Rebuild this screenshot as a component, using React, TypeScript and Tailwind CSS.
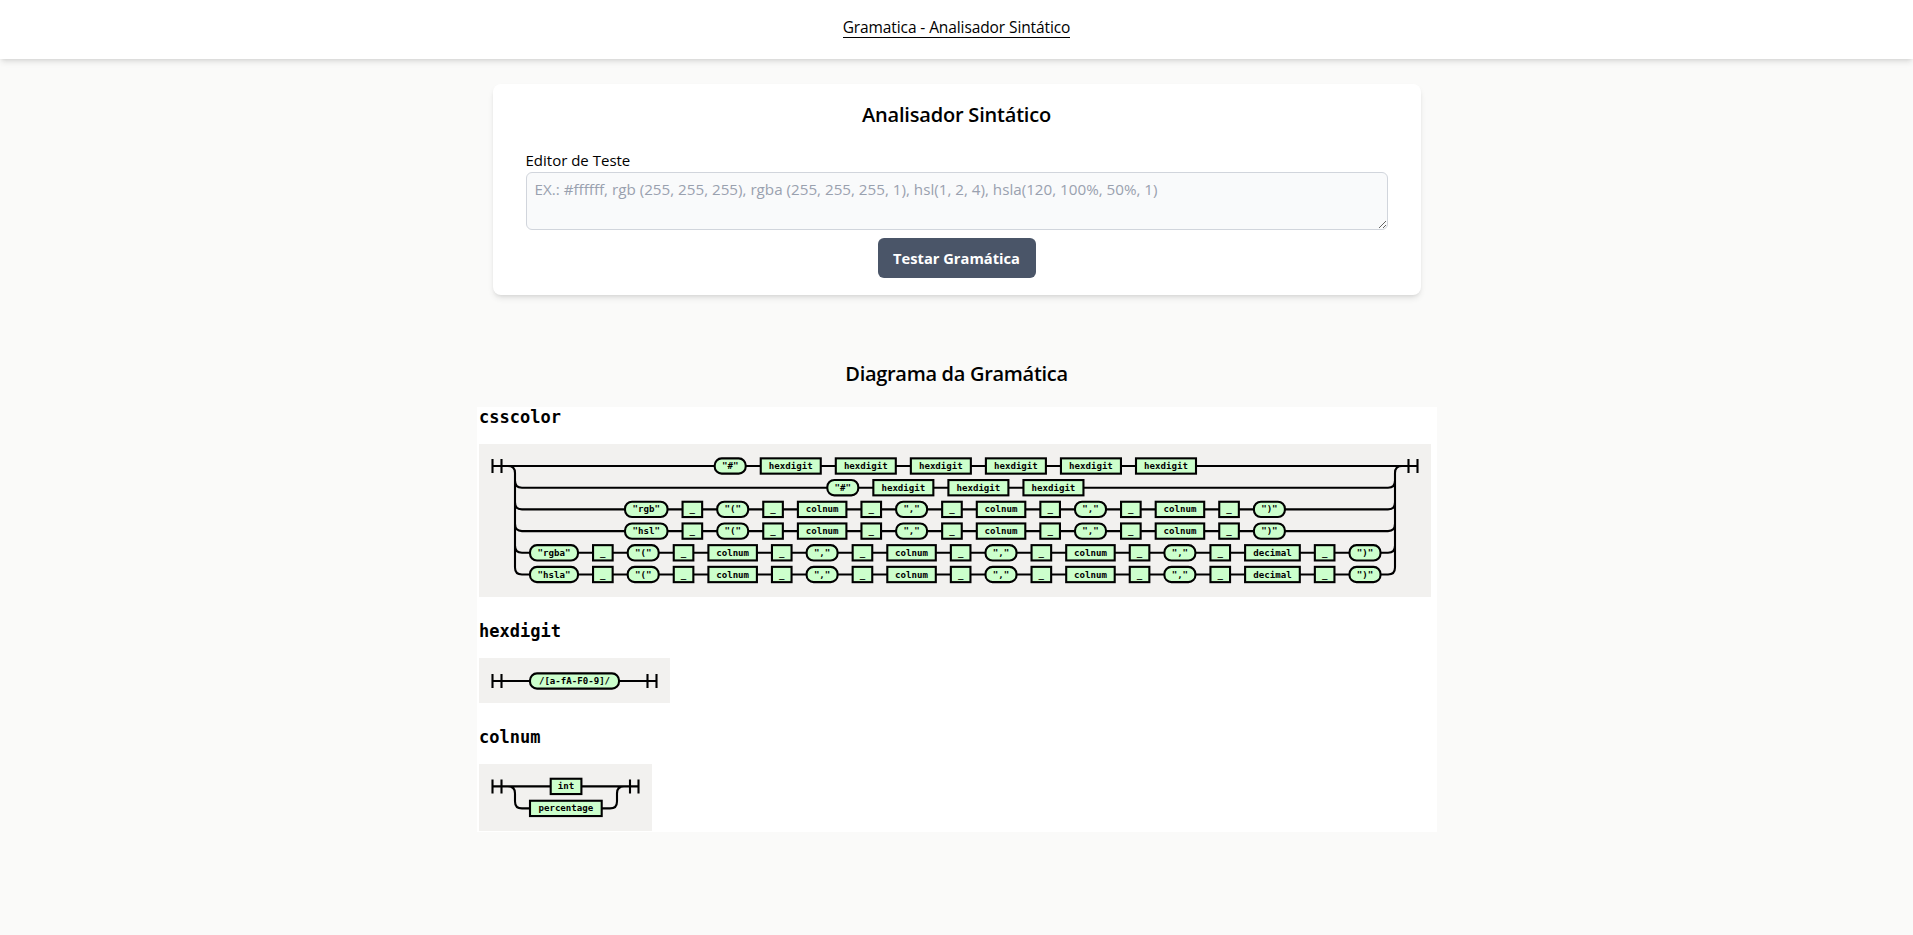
const ROW_H = 17.3;
const GAP = 13.05;

type Item = { label: string; width: number; pill?: boolean };

const hex: Item = { label: 'hexdigit', width: 62 };
const ws: Item = { label: '_', width: 21.6 };
const col: Item = { label: 'colnum', width: 50.5 };
const dec: Item = { label: 'decimal', width: 56.7 };
const pill = (label: string, width = 33): Item => ({ label, width, pill: true });

const comma = pill('","');
const open = pill('"("');
const close = pill('")"');

function colorRow(name: string, width: number) {
  return [pill(name, width), ws, open, ws, col, ws, comma, ws, col, ws, comma, ws, col, ws, close];
}

function alphaRow(name: string) {
  return [pill(name, 50), ws, open, ws, col, ws, comma, ws, col, ws, comma, ws, col, ws, comma, ws, dec, ws, close];
}

const cssRows = [
  { x: 234.7, items: [pill('"#"'), hex, hex, hex, hex, hex, hex] },
  { x: 347.3, items: [pill('"#"'), hex, hex, hex] },
  { x: 145, items: colorRow('"rgb"', 44.5) },
  { x: 145, items: colorRow('"hsl"', 44.5) },
  { x: 50, items: alphaRow('"rgba"') },
  { x: 50, items: alphaRow('"hsla"') },
];

function Node({ item, x, y }: { item: Item; x: number; y: number }) {
  return (
    <g>
      <rect
        x={x + 1}
        y={y - ROW_H / 2 + 1}
        width={item.width - 2}
        height={ROW_H - 2}
        rx={item.pill ? 7 : 0}
        fill="#ccffcc"
        stroke="#000"
        strokeWidth="2.1"
      />
      <text
        x={x + item.width / 2}
        y={y + 3}
        textAnchor="middle"
        fontSize="9.1"
        fontWeight="700"
        fill="#000"
        fontFamily="'DejaVu Sans Mono', monospace"
      >
        {item.label}
      </text>
    </g>
  );
}

function Bars({ x1, x2, y }: { x1: number; x2: number; y: number }) {
  return (
    <path d={`M${x1} ${y - 7}V${y + 7}M${x2} ${y - 7}V${y + 7}M${x1} ${y}H${x2}`} fill="none" stroke="#000" strokeWidth="2.1" />
  );
}

function CssColorDiagram() {
  const ys = cssRows.map((_, i) => 22 + i * 21.7);
  return (
    <svg width="952" height="153" viewBox="0 0 952 153" className="block bg-[#f2f1ef]">
      <g fill="none" stroke="#000" strokeWidth="2.1">
        <path d={`M22 22H929`} />
        <path d={`M29 22Q36 22 36 29V${ys[5] - 7}Q36 ${ys[5]} 43 ${ys[5]}`} />
        <path d={`M923 22Q916 22 916 29V${ys[5] - 7}Q916 ${ys[5]} 909 ${ys[5]}`} />
        {ys.slice(1, 5).map((y) => (
          <path key={y} d={`M36 ${y - 7}Q36 ${y} 43 ${y}H909Q916 ${y} 916 ${y - 7}`} />
        ))}
        <path d={`M43 ${ys[5]}H909`} />
      </g>
      <Bars x1={13.5} x2={22.5} y={22} />
      <Bars x1={929.5} x2={938.5} y={22} />
      {cssRows.map((row, i) => {
        let x = row.x;
        return row.items.map((item, j) => {
          const node = <Node key={`${i}-${j}`} item={item} x={x} y={ys[i]} />;
          x += item.width + GAP;
          return node;
        });
      })}
    </svg>
  );
}

function HexDigitDiagram() {
  return (
    <svg width="191" height="45" viewBox="0 0 191 45" className="block bg-[#f2f1ef]">
      <Bars x1={13.5} x2={22.5} y={23} />
      <Bars x1={168.5} x2={177.5} y={23} />
      <path d="M22 23H169" fill="none" stroke="#000" strokeWidth="2.1" />
      <Node item={pill('/[a-fA-F0-9]/', 91)} x={50} y={23} />
    </svg>
  );
}

function ColNumDiagram() {
  return (
    <svg width="173" height="67" viewBox="0 0 173 67" className="block bg-[#f2f1ef]">
      <Bars x1={13.5} x2={22.5} y={22.4} />
      <Bars x1={151} x2={159.5} y={22.4} />
      <path
        d="M22 22.4H152M29 22.4Q36 22.4 36 29.4V37.4Q36 44.4 43 44.4H131Q138 44.4 138 37.4V29.4Q138 22.4 145 22.4"
        fill="none"
        stroke="#000"
        strokeWidth="2.1"
      />
      <Node item={{ label: 'int', width: 32.7 }} x={70.7} y={22.4} />
      <Node item={{ label: 'percentage', width: 73.7 }} x={50} y={44.4} />
    </svg>
  );
}

export default function App() {
  return (
    <div className="min-h-[935px] bg-[#fafaf9] text-black font-['Open_Sans',sans-serif]">
      <header className="h-[59px] bg-white shadow-md flex items-center justify-center pb-[4px]">
        <a href="#" className="text-[15.5px] leading-5 border-b border-black tracking-[-0.1px]">
          Gramatica - Analisador Sintático
        </a>
      </header>

      <main className="flex flex-col items-center">
        <section className="mt-[25px] w-[928px] h-[211px] bg-white rounded-lg shadow-md px-[33px] pt-[17px]">
          <h2 className="text-center text-xl leading-7 font-semibold tracking-[-0.2px]">Analisador Sintático</h2>
          <label className="block mt-[21px] text-[15px] leading-5">Editor de Teste</label>
          <textarea
            placeholder="EX.: #ffffff, rgb (255, 255, 255), rgba (255, 255, 255, 1), hsl(1, 2, 4), hsla(120, 100%, 50%, 1)"
            className="block mt-[2px] w-full h-[58px] px-2 py-1 bg-gray-50 border border-gray-300 rounded-md text-[15.2px] leading-6 placeholder:text-gray-400 outline-none"
          />
          <div className="flex justify-center mt-2">
            <button className="w-[158px] h-10 bg-[#4a5568] text-white text-[14.7px] font-bold rounded-md">Testar Gramática</button>
          </div>
        </section>

        <h2 className="mt-[65px] h-7 text-center text-xl leading-7 font-semibold tracking-[-0.3px]">Diagrama da Gramática</h2>

        <section className="mt-[19px] w-[960px] h-[425px] bg-white pl-[2.5px] font-['DejaVu_Sans_Mono',monospace]">
          <h3 className="h-[37px] text-[17px] leading-5 font-bold">csscolor</h3>
          <CssColorDiagram />
          <h3 className="mt-6 h-[37px] text-[17px] leading-5 font-bold">hexdigit</h3>
          <HexDigitDiagram />
          <h3 className="mt-6 h-[37px] text-[17px] leading-5 font-bold">colnum</h3>
          <ColNumDiagram />
        </section>
      </main>
    </div>
  );
}
